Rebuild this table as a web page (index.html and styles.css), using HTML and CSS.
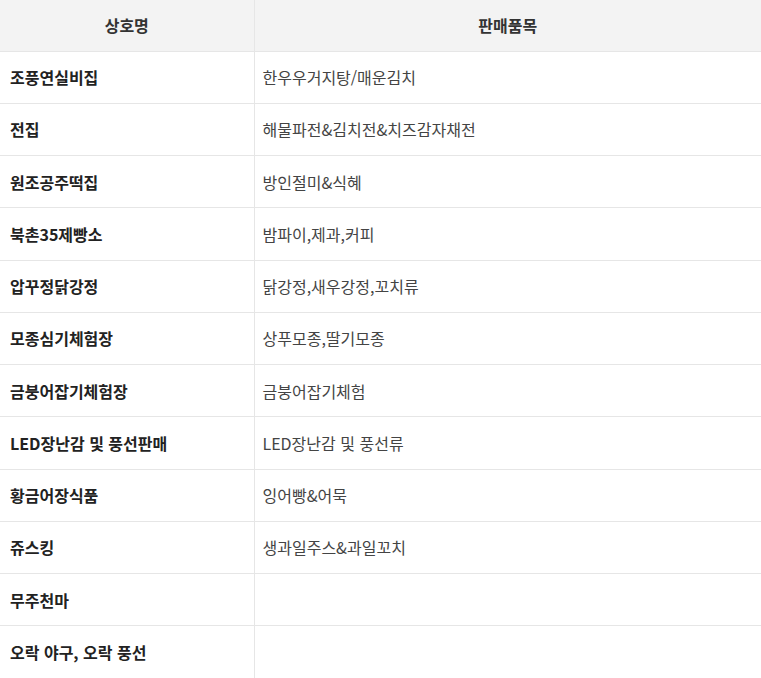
FILE: index.html
```html
<!DOCTYPE html>
<html lang="ko">
<head>
<meta charset="utf-8">
<title>판매품목</title>
<link rel="stylesheet" href="styles.css">
</head>
<body>
<table class="shops">
  <colgroup>
    <col class="col-name">
    <col class="col-items">
  </colgroup>
  <thead>
    <tr><th>상호명</th><th>판매품목</th></tr>
  </thead>
  <tbody>
    <tr><td class="name">조풍연실비집</td><td class="items">한우우거지탕/매운김치</td></tr>
    <tr><td class="name">전집</td><td class="items">해물파전&amp;김치전&amp;치즈감자채전</td></tr>
    <tr><td class="name">원조공주떡집</td><td class="items">방인절미&amp;식혜</td></tr>
    <tr><td class="name">북촌35제빵소</td><td class="items">밤파이,제과,커피</td></tr>
    <tr><td class="name">압꾸정닭강정</td><td class="items">닭강정,새우강정,꼬치류</td></tr>
    <tr><td class="name">모종심기체험장</td><td class="items">상푸모종,딸기모종</td></tr>
    <tr><td class="name">금붕어잡기체험장</td><td class="items">금붕어잡기체험</td></tr>
    <tr><td class="name">LED장난감 및 풍선판매</td><td class="items">LED장난감 및 풍선류</td></tr>
    <tr><td class="name">황금어장식품</td><td class="items">잉어빵&amp;어묵</td></tr>
    <tr><td class="name">쥬스킹</td><td class="items">생과일주스&amp;과일꼬치</td></tr>
    <tr><td class="name">무주천마</td><td class="items"></td></tr>
    <tr><td class="name">오락 야구, 오락 풍선</td><td class="items"></td></tr>
  </tbody>
</table>
</body>
</html>
```
FILE: styles.css
```css
html, body {
  margin: 0;
  padding: 0;
  background: #fff;
}
body {
  font-family: "Noto Sans CJK KR", "Noto Sans", sans-serif;
  font-size: 16px;
  color: #333;
}
.shops {
  width: 761px;
  border-collapse: collapse;
  table-layout: fixed;
}
.col-name { width: 254px; }
.shops th {
  height: 51px;
  padding: 0 10px;
  background: #f3f3f3;
  color: #333;
  font-weight: 700;
  text-align: center;
  border-right: 1px solid #e6e6e6;
  border-bottom: 1px solid #e6e6e6;
  box-sizing: border-box;
}
.shops td {
  height: 52.25px;
  padding: 0 10px;
  border-right: 1px solid #e6e6e6;
  border-bottom: 1px solid #e6e6e6;
  box-sizing: border-box;
  text-align: left;
  vertical-align: middle;
}
.shops th:last-child, .shops td:last-child { border-right: none; }
.name {
  font-weight: 700;
  color: #222;
}
.shops .items {
  color: #444;
  padding-left: 8px;
}
```
